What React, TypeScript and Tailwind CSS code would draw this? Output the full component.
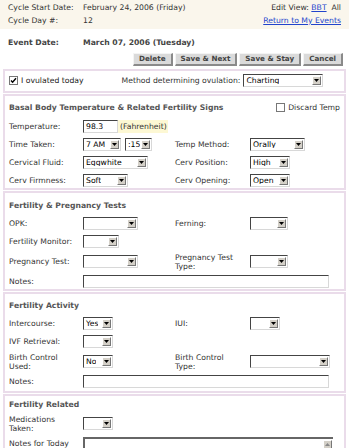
import * as React from "react";

const selBox =
  "flex h-[13px] items-center bg-white border-t border-l border-t-[#444] border-l-[#444] border-b border-r border-b-[#d8d8d8] border-r-[#d8d8d8]";

function Arrow() {
  return (
    <span className="ml-auto mr-[1px] flex h-[9px] w-[9px] shrink-0 items-center justify-center border-t border-l border-t-[#fff] border-l-[#fff] border-b border-r border-b-[#777] border-r-[#777] bg-[#d4d0c8]">
      <svg width="5" height="3" viewBox="0 0 5 3">
        <path d="M0 0h5L2.5 3z" fill="#000" />
      </svg>
    </span>
  );
}

function Select({ value, className }: { value?: string; className: string }) {
  return (
    <div className={`${selBox} ${className}`}>
      <span className="overflow-hidden whitespace-nowrap pl-[2px] leading-none text-black">{value}</span>
      <Arrow />
    </div>
  );
}

function TextBox({ className, children }: { className: string; children?: React.ReactNode }) {
  return (
    <div className={`${selBox} ${className}`}>
      <span className="pl-[2px] leading-none text-black">{children}</span>
    </div>
  );
}

function Btn({ label }: { label: string }) {
  return (
    <button
      type="button"
      className="h-[13px] border-t border-l border-t-[#f4f4f4] border-l-[#f4f4f4] border-b-2 border-r-2 border-b-[#8a8a8a] border-r-[#8a8a8a] bg-[#dadada] px-[5px] text-[7.2px] font-bold leading-none text-[#444]"
    >
      {label}
    </button>
  );
}

function Section({ title, right, children, className }: { title?: string; right?: React.ReactNode; children: React.ReactNode; className: string }) {
  return (
    <div className={`border-2 border-[#eadcea] pl-[4px] pr-[4px] ${className}`}>
      {title && (
        <div className="flex h-[14px] items-center justify-between">
          <span className="font-bold text-[#555]">{title}</span>
          {right}
        </div>
      )}
      {children}
    </div>
  );
}

function Label({ children, className = "" }: { children: React.ReactNode; className?: string }) {
  return <span className={`w-[74px] shrink-0 leading-[9px] text-[#333] ${className}`}>{children}</span>;
}

function Check({ checked }: { checked?: boolean }) {
  return (
    <span className="mr-[3px] flex h-[9px] w-[9px] items-center justify-center border border-[#777] bg-white">
      {checked && (
        <svg width="7" height="7" viewBox="0 0 7 7">
          <path d="M1 3.5l1.6 1.8L6 1.2" stroke="#000" strokeWidth="1.4" fill="none" />
        </svg>
      )}
    </span>
  );
}

function Row({ children, className = "" }: { children: React.ReactNode; className?: string }) {
  return <div className={`flex h-[13px] items-center ${className}`}>{children}</div>;
}

function Half({ children }: { children: React.ReactNode }) {
  return <div className="flex w-[166px] shrink-0 items-center">{children}</div>;
}

export default function App() {
  return (
    <div className="h-[448px] w-[349px] overflow-hidden bg-white font-['DejaVu_Sans',Verdana,sans-serif] text-[7.7px] text-[#333]">
      <div className="flex h-[29px] bg-[#faf6ec] px-[8px] pt-[1px]">
        <div className="flex flex-col">
          <div className="flex h-[13px] items-center">
            <span className="w-[75px]">Cycle Start Date:</span>
            <span>February 24, 2006 (Friday)</span>
          </div>
          <div className="flex h-[13px] items-center">
            <span className="w-[75px]">Cycle Day #:</span>
            <span>12</span>
          </div>
        </div>
        <div className="ml-auto flex flex-col items-end">
          <div className="flex h-[13px] items-center">
            Edit View:&nbsp;<span className="text-[#2244cc] underline">BBT</span>&nbsp;&nbsp;All
          </div>
          <div className="flex h-[13px] items-center text-[#2244cc] underline">Return to My Events</div>
        </div>
      </div>

      <div className="mt-[7px] flex h-[14px] items-center px-[8px] font-bold text-[#444]">
        <span className="w-[75px]">Event Date:</span>
        <span>March 07, 2006 (Tuesday)</span>
      </div>

      <div className="mt-[3px] flex justify-end gap-[2px] pr-[6px]">
        <Btn label="Delete" />
        <Btn label="Save & Next" />
        <Btn label="Save & Stay" />
        <Btn label="Cancel" />
      </div>

      <div className="mx-[3px] mt-[3px] flex flex-col gap-[1px]">
        <Section className="h-[24px] justify-center pt-[3px]">
          <Row>
            <Check checked />
            <span className="text-[#222]">I ovulated today</span>
            <span className="ml-[38px] text-[#333]">Method determining ovulation:</span>
            <Select value="Charting" className="ml-[3px] w-[80px]" />
          </Row>
        </Section>

        <Section
          className="h-[96px] pt-[5px]"
          title="Basal Body Temperature & Related Fertility Signs"
          right={
            <span className="flex items-center">
              <Check />
              <span>Discard Temp</span>
            </span>
          }
        >
          <div className="mt-[5px] flex flex-col gap-[5px]">
            <Row>
              <Label>Temperature:</Label>
              <TextBox className="w-[35px]">98.3</TextBox>
              <span className="flex h-[13px] items-center bg-[#fdf8d4] pl-[2px] pr-[1px]">(Fahrenheit)</span>
            </Row>
            <Row>
              <Half>
                <Label>Time Taken:</Label>
                <Select value="7 AM" className="w-[38px]" />
                <Select value=":15" className="ml-[4px] w-[27px]" />
              </Half>
              <Label className="w-[75px]">Temp Method:</Label>
              <Select value="Orally" className="w-[55px]" />
            </Row>
            <Row>
              <Half>
                <Label>Cervical Fluid:</Label>
                <Select value="Eggwhite" className="w-[65px]" />
              </Half>
              <Label className="w-[75px]">Cerv Position:</Label>
              <Select value="High" className="w-[40px]" />
            </Row>
            <Row>
              <Half>
                <Label>Cerv Firmness:</Label>
                <Select value="Soft" className="w-[45px]" />
              </Half>
              <Label className="w-[75px]">Cerv Opening:</Label>
              <Select value="Open" className="w-[40px]" />
            </Row>
          </div>
        </Section>

        <Section className="h-[100px] pt-[6px]" title="Fertility & Pregnancy Tests">
          <div className="mt-[4px] flex flex-col gap-[5px]">
            <Row>
              <Half>
                <Label>OPK:</Label>
                <Select className="w-[55px]" />
              </Half>
              <Label className="w-[75px]">Ferning:</Label>
              <Select className="w-[38px]" />
            </Row>
            <Row>
              <Label>Fertility Monitor:</Label>
              <Select className="w-[36px]" />
            </Row>
            <Row className="h-[17px]">
              <Half>
                <Label>Pregnancy Test:</Label>
                <Select className="w-[55px]" />
              </Half>
              <Label className="w-[75px]">
                Pregnancy Test
                <br />
                Type:
              </Label>
              <Select className="w-[38px]" />
            </Row>
            <Row>
              <Label>Notes:</Label>
              <TextBox className="w-[246px]" />
            </Row>
          </div>
        </Section>

        <Section className="h-[101px] pt-[5px]" title="Fertility Activity">
          <div className="mt-[4px] flex flex-col gap-[5px]">
            <Row>
              <Half>
                <Label>Intercourse:</Label>
                <Select value="Yes" className="w-[30px]" />
              </Half>
              <Label className="w-[75px]">IUI:</Label>
              <Select className="w-[30px]" />
            </Row>
            <Row>
              <Label>IVF Retrieval:</Label>
              <Select className="w-[30px]" />
            </Row>
            <Row className="h-[17px]">
              <Half>
                <Label>
                  Birth Control
                  <br />
                  Used:
                </Label>
                <Select value="No" className="w-[30px]" />
              </Half>
              <Label className="w-[75px]">
                Birth Control
                <br />
                Type:
              </Label>
              <Select className="w-[80px]" />
            </Row>
            <Row>
              <Label>Notes:</Label>
              <TextBox className="w-[246px]" />
            </Row>
          </div>
        </Section>

        <Section className="h-[60px] pt-[2px]" title="Fertility Related">
          <div className="mt-[3px] flex flex-col gap-[5px]">
            <Row className="h-[17px]">
              <Label>
                Medications
                <br />
                Taken:
              </Label>
              <Select className="w-[30px]" />
            </Row>
            <div className="flex items-start">
              <Label className="pt-[2px]">
                Notes for Today
                <br />
                (500 characters):
              </Label>
              <div className="flex h-[30px] w-[250px] justify-end border-t-2 border-l-2 border-t-[#666] border-l-[#666] bg-white pr-[1px] pt-[1px]">
                <span className="flex h-[9px] w-[9px] items-center justify-center border-t border-l border-t-[#fff] border-l-[#fff] border-b border-r border-b-[#777] border-r-[#777] bg-[#d4d0c8]">
                  <svg width="5" height="3" viewBox="0 0 5 3">
                    <path d="M0 3h5L2.5 0z" fill="#888" />
                  </svg>
                </span>
              </div>
            </div>
          </div>
        </Section>
      </div>
    </div>
  );
}
